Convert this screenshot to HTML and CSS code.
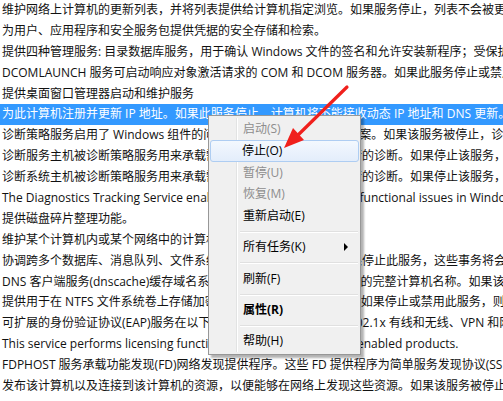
FILE: index.html
```html
<!DOCTYPE html>
<html lang="zh-CN">
<head>
    <meta charset="UTF-8">
    <title>服务</title>
    <link rel="stylesheet" href="styles.css">
</head>
<body>
    <div class="list">
        <div class="row">维护网络上计算机的更新列表，并将列表提供给计算机指定浏览。如果服务停止，列表不会被更新或维护。</div>
        <div class="row">为用户、应用程序和安全服务包提供凭据的安全存储和检索。</div>
        <div class="row">提供四种管理服务: 目录数据库服务，用于确认 Windows 文件的签名和允许安装新程序；受保护的根服务</div>
        <div class="row">DCOMLAUNCH 服务可启动响应对象激活请求的 COM 和 DCOM 服务器。如果此服务停止或禁用</div>
        <div class="row">提供桌面窗口管理器启动和维护服务</div>
        <div class="row selected">为此计算机注册并更新 IP 地址。如果此服务停止，计算机将不能接收动态 IP 地址和 DNS 更新。</div>
        <div class="row">诊断策略服务启用了 Windows 组件的问题检测、疑难解答和解决方案。如果该服务被停止，诊断将不再运行。</div>
        <div class="row">诊断服务主机被诊断策略服务用来承载需要在本地服务上下文中运行的诊断。如果停止该服务，依赖</div>
        <div class="row">诊断系统主机被诊断策略服务用来承载需要在本地系统上下文中运行的诊断。如果停止该服务，依赖</div>
        <div class="row">The Diagnostics Tracking Service enables data collection about   functional issues in Windows components.</div>
        <div class="row">提供磁盘碎片整理功能。</div>
        <div class="row">维护某个计算机内或某个网络中的计算机上的文件链接。</div>
        <div class="row">协调跨多个数据库、消息队列、文件系统等资源管理器的事务。如果停止此服务，这些事务将会失败。</div>
        <div class="row">DNS 客户端服务(dnscache)缓存域名系统(DNS)名称并注册该计算机的完整计算机名称。如果该服务被停止</div>
        <div class="row">提供用于在 NTFS 文件系统卷上存储加密文件的核心文件加密技术。如果停止或禁用此服务，则应用程序</div>
        <div class="row">可扩展的身份验证协议(EAP)服务在以下情况下提供网络身份验证: 802.1x 有线和无线、VPN 和网络访问保护</div>
        <div class="row">This service performs licensing functions for Windows Live Mail enabled products.</div>
        <div class="row">FDPHOST 服务承载功能发现(FD)网络发现提供程序。这些 FD 提供程序为简单服务发现协议(SSDP)</div>
        <div class="row">发布该计算机以及连接到该计算机的资源，以便能够在网络上发现这些资源。如果该服务被停止，将不再</div>
    </div>

    <div class="menu">
        <div class="item disabled">启动(S)</div>
        <div class="item hover">停止(O)</div>
        <div class="item disabled">暂停(U)</div>
        <div class="item disabled">恢复(M)</div>
        <div class="item">重新启动(E)</div>
        <div class="sep"></div>
        <div class="item sub">所有任务(K)</div>
        <div class="sep"></div>
        <div class="item">刷新(F)</div>
        <div class="sep"></div>
        <div class="item bold">属性(R)</div>
        <div class="sep"></div>
        <div class="item">帮助(H)</div>
    </div>

    <!-- red pointer drawn on top of the screenshot -->
    <svg class="pointer" width="503" height="401" viewBox="0 0 503 401">
        <line x1="347" y1="87" x2="296" y2="137" stroke="#f0201c" stroke-width="3.2" stroke-linecap="round"/>
        <polygon points="284,148 304,140 293,128" fill="#f0201c"/>
    </svg>
</body>
</html>
```

FILE: styles.css
```css
body {
    margin: 0;
    width: 503px;
    height: 401px;
    overflow: hidden;
    position: relative;
    background-color: #fff;
    color: #111;
    font-family: "Open Sans", "Noto Sans CJK SC", sans-serif;
    font-size: 12px;
}

.row {
    height: 20.9px;
    line-height: 20.9px;
    padding-left: 2px;
    white-space: pre;
    overflow: hidden;
}

.row.selected {
    background-color: #3399ff;
    color: #fff;
}

/* context menu, windows 7 style */
.menu {
    position: absolute;
    left: 208px;
    top: 115px;
    width: 151px;
    padding: 2px 0;
    border: 1px solid #979797;
    background-color: #f0f0f0;
    box-shadow: 3px 3px 2px rgba(0, 0, 0, 0.3);
}

.menu::before {
    content: '';
    position: absolute;
    top: 2px;
    bottom: 2px;
    left: 27px;
    width: 1px;
    background-color: #e2e3e3;
    border-right: 1px solid #fff;
}

.item {
    position: relative;
    box-sizing: border-box;
    height: 21.8px;
    line-height: 21.8px;
    margin: 0 2px;
    padding-left: 32px;
    white-space: nowrap;
    color: #000;
}

.item.disabled {
    color: #8d8d8d;
}

.item.hover {
    border: 1px solid #aecdf2;
    border-radius: 3px;
    line-height: 19.8px;
    padding-left: 31px;
    margin: 0 1px;
    background: linear-gradient(#f3f8fe, #e3edfb);
}

.item.bold {
    font-weight: bold;
}

.item.sub::after {
    content: '';
    position: absolute;
    right: 10px;
    top: 7px;
    border-left: 4px solid #000;
    border-top: 4px solid transparent;
    border-bottom: 4px solid transparent;
}

.sep {
    height: 1px;
    margin: 4px 2px 3.5px 31px;
    background-color: #e0e0e0;
    border-bottom: 1px solid #fff;
}

.pointer {
    position: absolute;
    left: 0;
    top: 0;
}
```
